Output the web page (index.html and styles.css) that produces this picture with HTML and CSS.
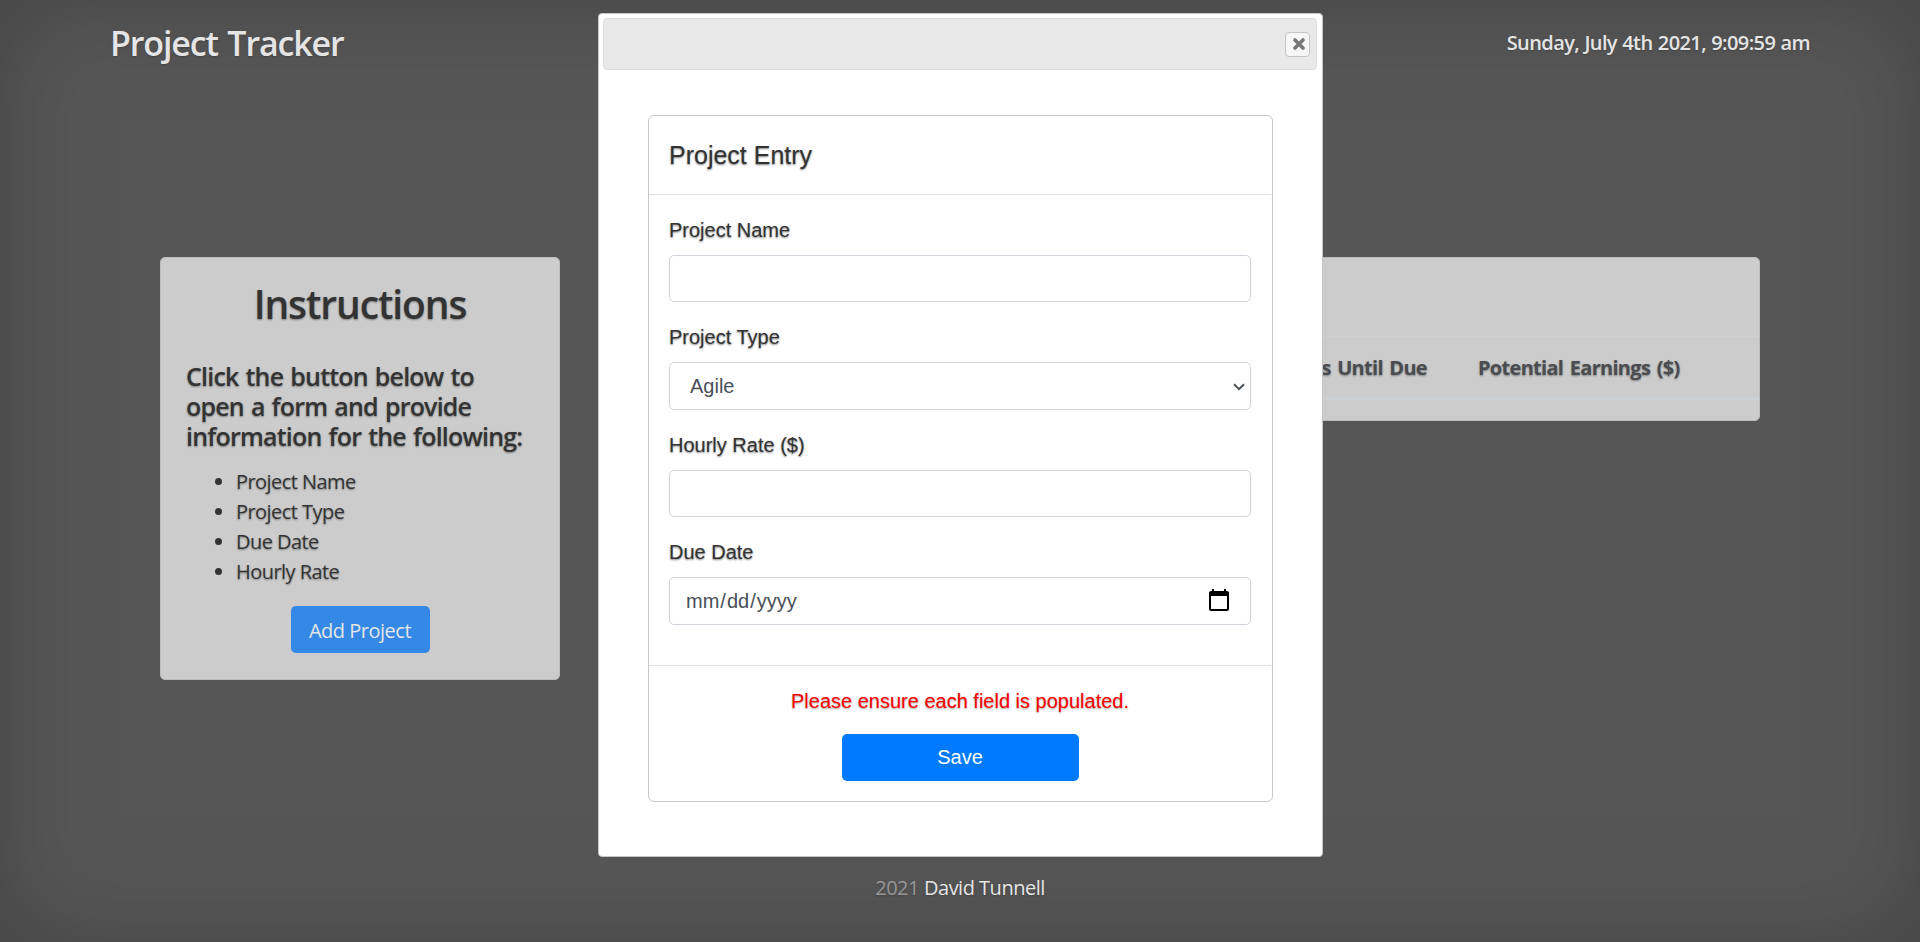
FILE: index.html
```html
<!DOCTYPE html>
<html lang="en">
<head>
<meta charset="utf-8">
<title>Project Tracker</title>
<link rel="stylesheet" href="styles.css">
</head>
<body>
<div class="page">
  <header class="masthead">
    <h3 class="brand">Project Tracker</h3>
    <div class="clock">Sunday, July 4th 2021, 9:09:59 am</div>
  </header>
  <main class="content">
    <section class="card instructions">
      <h1 class="instructions-title">Instructions</h1>
      <h4 class="instructions-lead">Click the button below to<br>open a form and provide<br>information for the following:</h4>
      <ul class="field-list">
        <li>Project Name</li>
        <li>Project Type</li>
        <li>Due Date</li>
        <li>Hourly Rate</li>
      </ul>
      <button class="btn add-btn" type="button">Add Project</button>
    </section>
    <section class="card projects">
      <table class="table">
        <colgroup><col class="col-wide"><col class="col-wide"><col class="col-wide"><col class="col-days"><col></colgroup>
        <thead><tr><th></th><th></th><th></th><th class="days">Days Until Due</th><th class="earnings">Potential Earnings ($)</th></tr></thead>
      </table>
    </section>
  </main>
  <footer class="footer"><span class="year">2021</span> <span class="author">David Tunnell</span></footer>
</div>
<div class="overlay"></div>
<div class="dialog">
  <div class="dialog-bar">
    <button class="close" type="button" aria-label="Close">
      <svg width="12" height="12" viewBox="0 0 12 12"><path d="M2 2L10 10M10 2L2 10" stroke="#777" stroke-width="3.6" stroke-linecap="round"/></svg>
    </button>
  </div>
  <form class="entry">
    <div class="entry-header">Project Entry</div>
    <div class="entry-body">
      <label class="label" for="name">Project Name</label>
      <input class="control" id="name" type="text">
      <label class="label" for="type">Project Type</label>
      <div class="select-wrap">
        <select class="control tall select" id="type"><option>Agile</option></select>
        <svg class="chevron" width="12" height="8" viewBox="0 0 12 8"><path d="M1 1.3L6 6.2L11 1.3" fill="none" stroke="#495057" stroke-width="2"/></svg>
      </div>
      <label class="label" for="rate">Hourly Rate ($)</label>
      <input class="control" id="rate" type="text">
      <label class="label" for="due">Due Date</label>
      <input class="control tall date" id="due" type="date">
    </div>
    <div class="entry-footer">
      <p class="error">Please ensure each field is populated.</p>
      <button class="btn save-btn" type="button">Save</button>
    </div>
  </form>
</div>
</body>
</html>
```
FILE: styles.css
```css
* { box-sizing: border-box; }
html { font-size: 20px; height: 100%; }
body {
  margin: 0;
  height: 942px;
  overflow: hidden;
  background: #333;
  color: #fff;
  font-family: "Open Sans", "Noto Sans", sans-serif;
  line-height: 30px;
}
h1, h3, h4, p, ul { margin: 0; }
.page {
  display: flex;
  flex-direction: column;
  height: 942px;
  text-shadow: 0 1px 2px rgba(0, 0, 0, .5);
  box-shadow: inset 0 0 100px rgba(0, 0, 0, .5);
}
.masthead {
  display: flex;
  justify-content: space-between;
  align-items: center;
  width: 1700px;
  height: 85px;
  margin: 0 auto 172px;
}
.brand { font-size: 34px; line-height: 42px; font-weight: 600; letter-spacing: -1.15px; word-spacing: 2px; }
.clock { font-weight: 600; letter-spacing: -.6px; word-spacing: .7px; }
.content {
  display: flex;
  align-items: flex-start;
  gap: 40px;
  width: 1600px;
  height: 424px;
  margin: 0 auto;
}
.card {
  background: #dcdcdc;
  border: 1px solid #c3c3c3;
  border-radius: 5px;
  color: #000;
}
.instructions {
  display: flex;
  flex-direction: column;
  width: 400px;
  height: 423px;
  padding: 16px 25px 25px;
}
.instructions-title { text-align: center; font-size: 39px; line-height: 60px; font-weight: 600; letter-spacing: -1.1px; }
.instructions-lead { margin-top: 27px; font-size: 25px; line-height: 30px; font-weight: 600; letter-spacing: -.8px; word-spacing: 1.3px; white-space: nowrap; }
.field-list { margin-top: 16px; padding-left: 50px; letter-spacing: -.55px; }
.btn {
  height: 47px;
  padding: 0;
  border: 0;
  border-radius: 5px;
  background: #007bff;
  color: #fff;
  font-family: inherit;
  font-size: 20px;
}
.add-btn { align-self: center; width: 139px; margin-top: 19px; padding-top: 1px; letter-spacing: -.5px; }
.projects { width: 1160px; height: 164px; padding-top: 78px; }
.table { width: 100%; table-layout: fixed; border-collapse: separate; border-spacing: 0; }
.table th {
  height: 64px;
  padding: 2px 0 0;
  border-top: 1px solid #dee2e6;
  border-bottom: 3px solid #dee2e6;
  font-weight: 700;
  text-align: left;
  color: #212529;
  letter-spacing: -.7px;
  white-space: nowrap;
}
.table .days { padding-right: 48px; text-align: right; word-spacing: 2px; }
.table .earnings { padding-left: 3px; word-spacing: 2px; }
.col-wide { width: 222px; }
.col-days { width: 208px; }
.footer { display: flex; justify-content: center; gap: 5px; padding-top: 192px; letter-spacing: -.5px; }
.year { color: rgba(255, 255, 255, .5); }
.overlay { position: absolute; inset: 0; background: rgba(170, 170, 170, .3); }

.dialog {
  position: absolute;
  left: 598px;
  top: 13px;
  width: 725px;
  height: 844px;
  padding: 4px 5px 4px 4px;
  background: #fff;
  border: 1px solid #c5c5c5;
  border-radius: 4px;
  color: #333;
  font-family: "Liberation Sans", Arial, sans-serif;
}
.dialog-bar {
  display: flex;
  align-items: center;
  justify-content: flex-end;
  height: 52px;
  padding-right: 6px;
  background: #e9e9e9;
  border: 1px solid #ddd;
  border-radius: 4px;
}
.close {
  display: flex;
  align-items: center;
  justify-content: center;
  width: 25px;
  height: 25px;
  padding: 0 0 0 2px;
  background: #f6f6f6;
  border: 1px solid #c5c5c5;
  border-radius: 4px;
}
.entry {
  width: 625px;
  height: 687px;
  margin: 45px 0 0 45px;
  border: 1px solid #c8c8c8;
  border-radius: 6px;
}
.entry-header {
  height: 79px;
  margin-right: 1px;
  padding: 24px 20px;
  border-bottom: 1px solid #dee2e6;
  font-size: 25px;
  text-shadow: 0 1px 2px rgba(0, 0, 0, .5);
}
.entry-body { display: flex; flex-direction: column; height: 470px; padding: 20px 21px 0 20px; }
.label { margin-bottom: 10px; text-shadow: 0 1px 2px rgba(0, 0, 0, .5); }
.control {
  flex: none;
  width: 582px;
  height: 47px;
  margin: 0 0 20px;
  padding: 7px 15px;
  border: 1px solid #ced4da;
  border-radius: 5px;
  background: #fff;
  color: #495057;
  font-family: inherit;
  font-size: 20px;
}
.tall { height: 48px; }
.select-wrap { position: relative; display: flex; }
.select { appearance: none; padding-left: 20px; }
.chevron { position: absolute; right: 6px; top: 21px; }
.date::-webkit-calendar-picker-indicator { width: 24px; height: 24px; margin: 0 4px 2px 0; padding: 0; background-size: 24px 24px; }
.entry-footer {
  display: flex;
  flex-direction: column;
  align-items: center;
  margin-right: 1px;
  padding-top: 20px;
  border-top: 1px solid #dfdfdf;
}
.error { color: #f00; text-shadow: 0 1px 2px rgba(0, 0, 0, .4); }
.save-btn { width: 237px; margin-top: 18px; }
```
